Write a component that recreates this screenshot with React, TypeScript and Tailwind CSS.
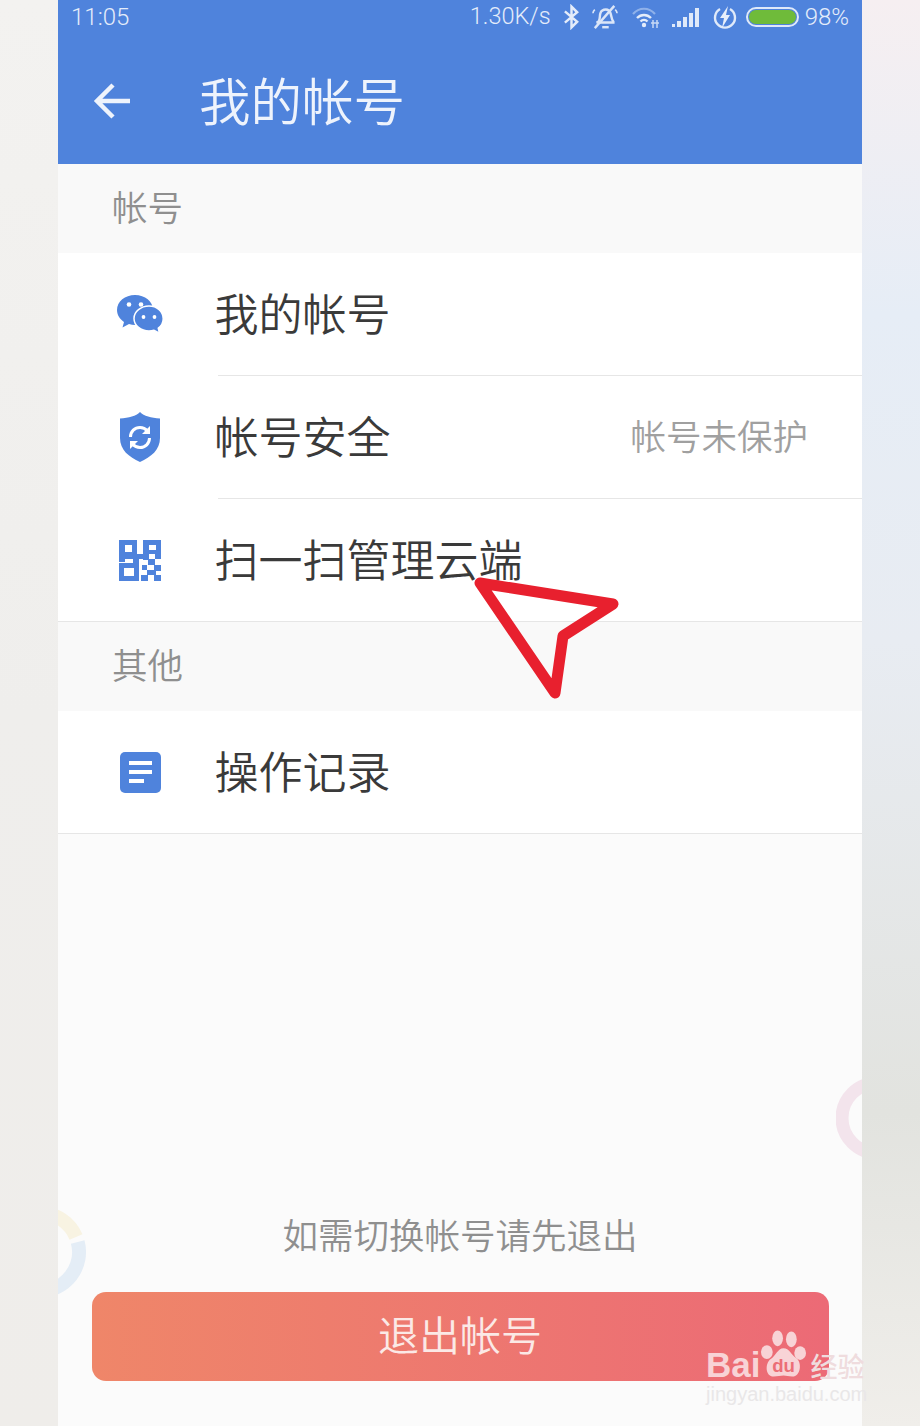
import type { ReactNode } from 'react';

const cjk = "font-['Noto_Sans_CJK_SC','Noto_Sans',sans-serif]";

function Bluetooth() {
  return (
    <svg width="17" height="26" viewBox="0 0 18 26" fill="none" stroke="#e4ecfa" strokeWidth="2.600">
      <path d="M2 7l13 11-6 6V2l6 6L2 19" />
    </svg>
  );
}

function BellOff() {
  return (
    <svg width="26" height="28" viewBox="0 0 28 28" fill="none" stroke="#dbe6f8" strokeWidth="2.600">
      <path d="M7 19c2-2 1-6 2-9 1-3 4-4 6-4s4 1 5 4c1 3 1 7 3 9v1H5z" />
      <path d="M11 25h7" />
      <path d="M3 26L24 2" />
      <path d="M1 10c0-2 1-3 2-4M25 6c1 1 2 2 2 4" strokeWidth="1.800" />
    </svg>
  );
}

function Wifi() {
  return (
    <svg width="28" height="24" viewBox="0 0 28 24" fill="none">
      <path d="M1 9c6-7 16-7 22 0" stroke="#8fb1ea" strokeWidth="2.200" />
      <path d="M5 13c4-4 10-4 14 0" stroke="#e4ecfa" strokeWidth="2.400" />
      <path d="M8.500 16.500c2-2 5-2 7 0" stroke="#e4ecfa" strokeWidth="2.400" />
      <circle cx="12" cy="20" r="2.200" fill="#e4ecfa" />
      <path d="M21 15v8M25 15v8M19 18h8" stroke="#c8d9f5" strokeWidth="1.500" />
    </svg>
  );
}

function Signal() {
  return (
    <svg width="28" height="20" viewBox="0 0 28 20" fill="#dfe9f9">
      <rect x="0" y="17" width="3" height="3" />
      <rect x="5" y="14" width="4" height="6" />
      <rect x="11" y="10" width="4" height="10" />
      <rect x="17" y="6" width="4" height="14" />
      <rect x="23" y="1" width="4" height="19" />
    </svg>
  );
}

function Charging() {
  return (
    <svg width="24" height="24" viewBox="0 0 24 24" fill="none">
      <path d="M7 4a10 10 0 1 0 10 0" stroke="#dfe9f9" strokeWidth="2.400" />
      <path d="M15 1L7 13h4l-2 10 8-13h-4z" fill="#e8effb" />
    </svg>
  );
}

function Battery() {
  return (
    <div className="flex h-[20px] w-[53px] items-center rounded-full border-2 border-[#dfe9f9] p-[1px]">
      <div className="h-full w-full rounded-full bg-[#6fbb3a]" />
    </div>
  );
}

function WechatIcon() {
  return (
    <svg width="48" height="40" viewBox="0 0 48 40" fill="#4f83dc">
      <path d="M19 1C9 1 1 7.500 1 16c0 5 2.800 9 7 12l-1.500 5.500L13 30c2 .6 4 .9 6 .9 10 0 18-6.500 18-15S29 1 19 1z" />
      <path d="M33 12c-8 0-15 5.600-15 12.500S25 37 33 37c1.800 0 3.500-.3 5-.8l5.500 3-1.200-5c3-2.300 4.900-5.700 4.900-9.500C47.200 17.600 41 12 33 12z" stroke="#fff" strokeWidth="1.500" />
      <circle cx="13" cy="10.500" r="2.300" fill="#fff" />
      <circle cx="25" cy="10.500" r="2.300" fill="#fff" />
      <circle cx="27.500" cy="23" r="1.900" fill="#fff" />
      <circle cx="38.500" cy="23" r="1.900" fill="#fff" />
    </svg>
  );
}

function ShieldIcon() {
  return (
    <svg width="42" height="50" viewBox="0 0 42 50" fill="none">
      <path d="M21 0c4 4 11 6 20 6.500V26c0 12-9 19-20 24C10 45 1 38 1 26V6.500C10 6 17 4 21 0z" fill="#4f83dc" />
      <path d="M11.500 25c0-5.500 4.200-9.500 9.500-9.500 3 0 5.500 1.200 7.500 3.500" stroke="#fff" strokeWidth="3" />
      <path d="M30.500 26c0 5.500-4.200 9.500-9.500 9.500-3 0-5.500-1.200-7.500-3.500" stroke="#fff" strokeWidth="3" />
      <path d="M31 14v8h-8z" fill="#fff" />
      <path d="M11 37v-8h8z" fill="#fff" />
    </svg>
  );
}

function QrIcon() {
  return (
    <svg width="42" height="41" viewBox="0 0 42 41" fill="#4f83dc" fillRule="evenodd">
      <path d="M0 0h18v14h6v5H6v3H0zM6 5v7h7V5z" />
      <path d="M24 0h18v19h-6v-5H24zM30 5v5h7V5z" />
      <path d="M0 23h14v-4h6v22H0zM5 28v8h10v-8z" />
      <path d="M24 14h6v5h6v6h6v6h-5v4h5v6h-7v-6h-7v-5h7v-5h-6v-5h-5zM22 35h7v6h-7zM23 25h5v5h-5z" />
    </svg>
  );
}

function DocIcon() {
  return (
    <div className="flex h-[41px] w-[41px] flex-col justify-center gap-[5px] rounded-[5px] bg-[#4f83dc] pl-[9px]">
      <div className="h-[4px] w-[23px] bg-white" />
      <div className="h-[4px] w-[23px] bg-white" />
      <div className="h-[4px] w-[15px] bg-white" />
    </div>
  );
}

function SectionLabel({ children }: { children: ReactNode }) {
  return (
    <div className="flex h-[89px] items-center bg-[#f9f9f9] pb-[5px] pl-[54px] text-[35.500px] font-[350] text-[#8f8f8f]">
      {children}
    </div>
  );
}

function Row({ icon, label, note }: { icon: ReactNode; label: string; note?: string }) {
  return (
    <div className="flex h-[122px] items-center bg-white pl-[58px] pr-[54px]">
      <div className="flex w-[48px] justify-center">{icon}</div>
      <span className="ml-[50.500px] pb-[4px] text-[44px] font-[350] leading-none text-[#3a3a3a]">{label}</span>
      {note && <span className="ml-auto pb-[4px] text-[35.500px] font-[350] text-[#a0a0a0]">{note}</span>}
    </div>
  );
}

function Divider() {
  return (
    <div className="bg-white pl-[160px]">
      <div className="h-px bg-[#e6e6e6]" />
    </div>
  );
}

export default function App() {
  return (
    <div className={`relative flex h-[1426px] w-[920px] overflow-hidden ${cjk}`}>
      <div className="w-[58px] bg-[linear-gradient(180deg,#f3f2f0,#efeeec_50%,#efedea)]" />

      <div className="relative flex w-[804px] flex-col overflow-hidden bg-[#fbfbfb]">
        <div className="h-[164px] bg-[#4f83dc]">
          <div className="flex h-[34px] items-center pl-[13px] pr-[13px] font-['Roboto',sans-serif] text-[24px] font-light text-[#e4ecfa]">
            <span>11:05</span>
            <div className="ml-auto flex items-center">
              <span className="text-[23.500px]">1.30K/s</span>
              <div className="ml-[12px]"><Bluetooth /></div>
              <div className="ml-[12px]"><BellOff /></div>
              <div className="ml-[14px]"><Wifi /></div>
              <div className="ml-[12px]"><Signal /></div>
              <div className="ml-[13px]"><Charging /></div>
              <div className="ml-[9px]"><Battery /></div>
              <span className="ml-[6px]">98%</span>
            </div>
          </div>
          <div className="flex h-[136px] items-center pb-[2px] pl-[35px] text-[#eef3fc]">
            <svg width="38" height="38" viewBox="0 0 38 38" fill="none" stroke="currentColor" strokeWidth="4.500">
              <path d="M37 19H4M20 3L4 19l16 16" />
            </svg>
            <span className="ml-[68px] pb-[5px] text-[51.500px] font-[350] leading-none">我的帐号</span>
          </div>
        </div>

        <SectionLabel>帐号</SectionLabel>
        <Row icon={<WechatIcon />} label="我的帐号" />
        <Divider />
        <Row icon={<ShieldIcon />} label="帐号安全" note="帐号未保护" />
        <Divider />
        <Row icon={<QrIcon />} label="扫一扫管理云端" />
        <div className="h-px bg-[#e6e6e6]" />
        <SectionLabel>其他</SectionLabel>
        <Row icon={<DocIcon />} label="操作记录" />
        <div className="h-px bg-[#e6e6e6]" />

        <div className="mt-auto flex flex-col items-center pb-[45px]">
          <p className="mb-[33px] text-[35.500px] font-[350] leading-[50px] text-[#8f8f8f]">如需切换帐号请先退出</p>
          <button className="flex h-[89px] w-[737px] items-center justify-center rounded-[14px] bg-[linear-gradient(90deg,#ef8669,#ec6a76)] pb-[5px] text-[41px] font-[350] text-[#fbe9e6]">
            退出帐号
          </button>
        </div>

        {/* faded rings in the page background */}
        <svg className="absolute left-0 top-[1205px]" width="28" height="96" viewBox="0 0 28 96" fill="none">
          <path d="M-18 8A39 39 0 0 1 18 32" stroke="#f8f3e2" strokeWidth="14" />
          <path d="M19.700 37A39 39 0 0 1-18 86" stroke="#e4edf6" strokeWidth="14" />
        </svg>
        <svg className="absolute right-0 top-[1072px]" width="26" height="94" viewBox="0 0 26 94" fill="none">
          <circle cx="41" cy="46" r="35" stroke="#f3e4ec" strokeWidth="13" />
        </svg>
      </div>

      <div className="w-[58px] bg-[linear-gradient(180deg,#f6eff1,#e6edf6_22%,#e8ecf2_45%,#e2e3df_78%,#f0eeea)]" />

      {/* red annotation arrow */}
      <svg className="absolute left-[470px] top-[572px]" width="155" height="130" viewBox="0 0 155 130" fill="none">
        <path d="M10 11L143 32 93 64 85 121z" stroke="#e8202e" strokeWidth="11" strokeLinejoin="round" />
      </svg>

      {/* watermark */}
      <div className="absolute left-[706px] top-[1328px] w-[165px] text-[#f8d3d6]">
        <div className="flex h-[52px] items-end font-['Liberation_Sans',sans-serif] text-[35px] font-bold">
          <span className="mb-[2px] leading-[26px]">Bai</span>
          <svg className="shrink-0" width="47" height="52" viewBox="0 0 48 52" fill="currentColor">
            <ellipse cx="7" cy="24" rx="6" ry="7" />
            <ellipse cx="18" cy="10" rx="5.500" ry="8" />
            <ellipse cx="32" cy="11" rx="5.500" ry="8" />
            <ellipse cx="41" cy="25" rx="6" ry="7" />
            <path d="M24 20c6 0 8 7 13 10 6 4 5 19-4 19-4 0-6-1-9-1s-6 1-10 1C5 49 5 35 11 31c5-3 7-11 13-11z" />
            <text x="24" y="44" textAnchor="middle" fontSize="19" fontWeight="700" fill="#ec6e76">du</text>
          </svg>
          <span className={`mb-[1px] ml-[3px] text-[27px] font-medium leading-[27px] text-[#efdcde] ${cjk}`}>经验</span>
        </div>
        <div className="mt-[4px] font-['Liberation_Sans',sans-serif] text-[20px] leading-none text-[#e9e7e8]">jingyan.baidu.com</div>
      </div>
    </div>
  );
}
